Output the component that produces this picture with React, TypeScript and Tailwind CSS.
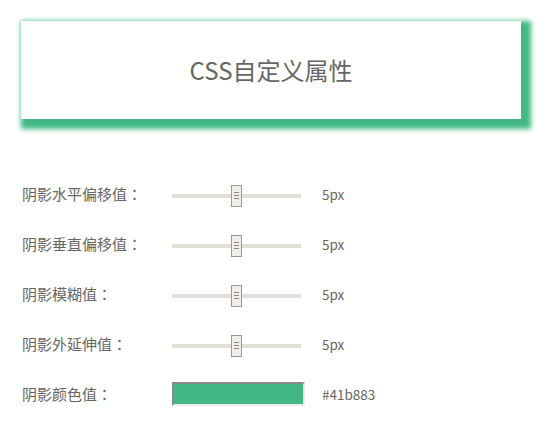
import React from "react";

const font = { fontFamily: '"Noto Sans CJK SC", "Noto Sans", sans-serif' };

function Slider() {
  return (
    <div className="relative w-[129px] h-[22px] flex items-center">
      <div className="w-full h-[4px] bg-[#e2ded8]" />
      <div className="absolute left-[59px] top-0 w-[11px] h-[22px] border border-[#9d978f] bg-[#f1eeea] flex flex-col items-center justify-center gap-[2px]">
        <div className="w-[5px] h-px bg-[#8e8880]" />
        <div className="w-[5px] h-px bg-[#8e8880]" />
        <div className="w-[5px] h-px bg-[#8e8880]" />
      </div>
    </div>
  );
}

function Label({ text }: { text: string }) {
  return (
    <div className="w-[150px] text-[15px] text-[#666]">
      {text}
      <span style={{ fontFamily: '"Noto Sans CJK TC", sans-serif' }}>：</span>
    </div>
  );
}

const rows = ["阴影水平偏移值", "阴影垂直偏移值", "阴影模糊值", "阴影外延伸值"];

export default function App() {
  return (
    <div className="w-[552px] h-[427px] bg-white overflow-hidden" style={font}>
      <div className="ml-[21px] mt-[21px] w-[500px] h-[98px] bg-white flex items-center justify-center shadow-[5px_5px_5px_5px_#41b883]">
        <span className="text-[24px] text-[#666] leading-none">CSS自定义属性</span>
      </div>
      <div className="mt-[50px] ml-[22px] flex flex-col">
        {rows.map((r) => (
          <div key={r} className="h-[50px] flex items-center">
            <Label text={r} />
            <div className="w-[150px] flex items-center pt-[3px]"><Slider /></div>
            <div className="text-[13.5px] text-[#666]">5px</div>
          </div>
        ))}
        <div className="h-[50px] flex items-center">
          <Label text="阴影颜色值" />
          <div className="w-[150px] flex items-center">
            <div className="w-[133px] h-[24px] border-2 border-t-[#8a8a8a] border-l-[#8a8a8a] border-b-[#ececec] border-r-[#ececec] bg-[#41b883]" />
          </div>
          <div className="text-[13.5px] text-[#666]">#41b883</div>
        </div>
      </div>
    </div>
  );
}
